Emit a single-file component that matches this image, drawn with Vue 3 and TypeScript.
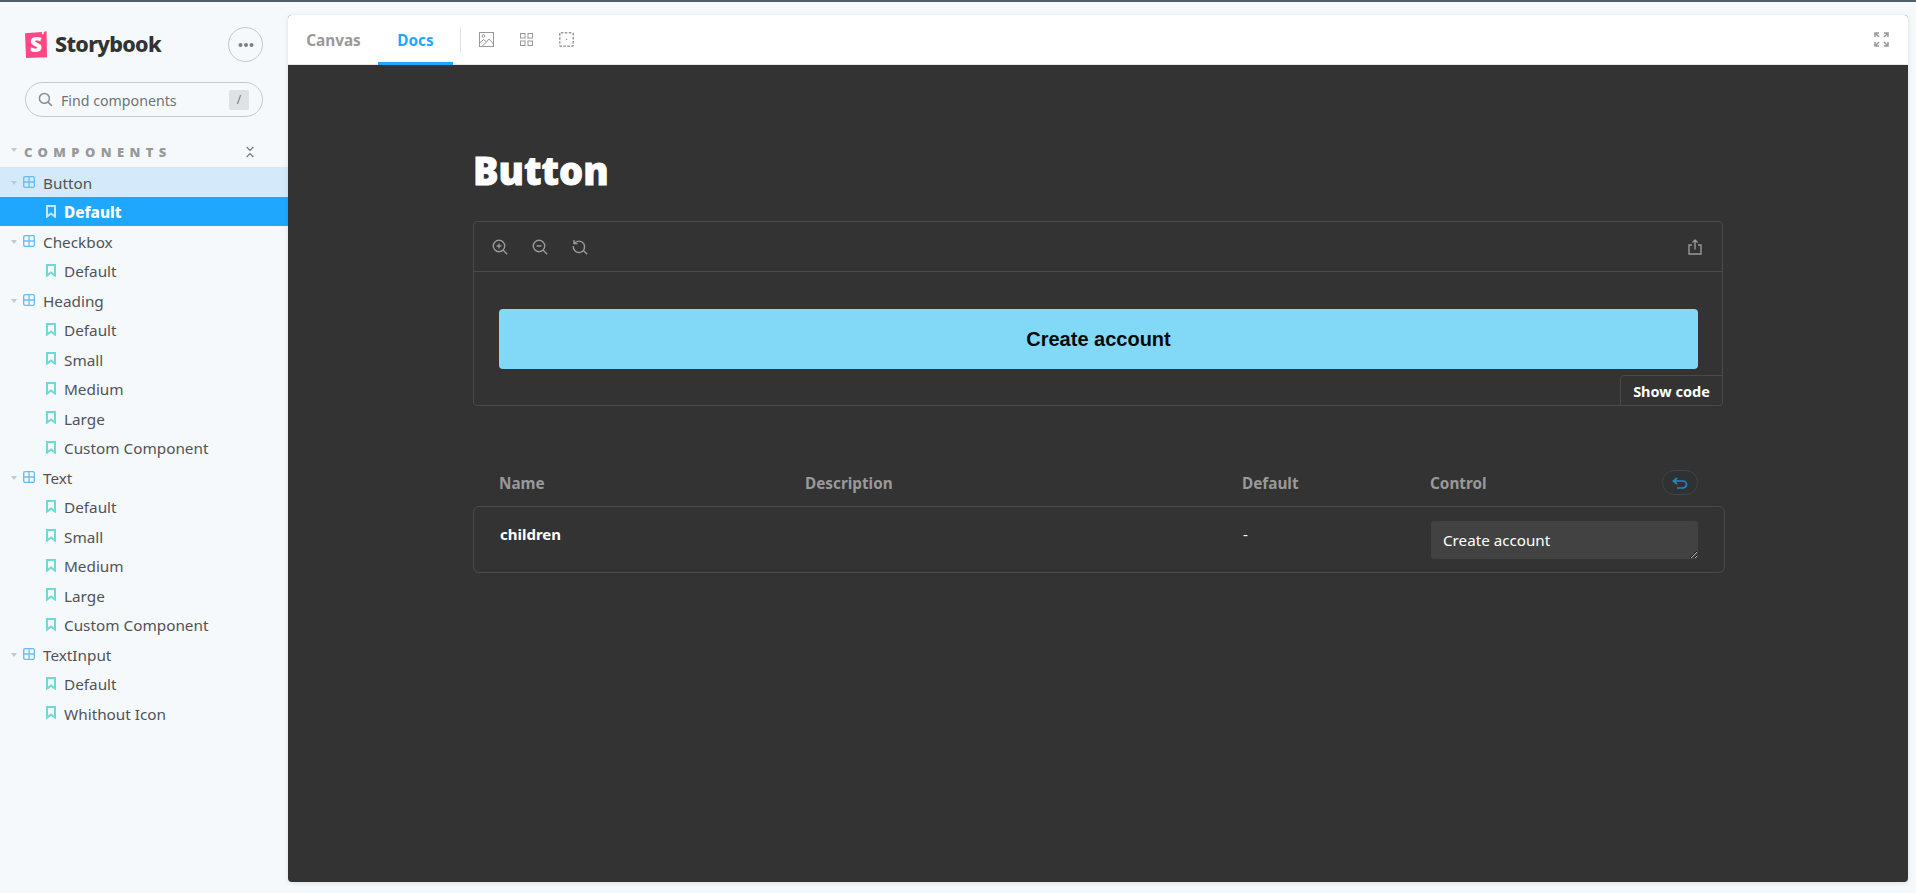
<script setup lang="ts">
import { ref } from "vue";

const groups = [
  { name: "Button", stories: ["Default"] },
  { name: "Checkbox", stories: ["Default"] },
  { name: "Heading", stories: ["Default", "Small", "Medium", "Large", "Custom Component"] },
  { name: "Text", stories: ["Default", "Small", "Medium", "Large", "Custom Component"] },
  { name: "TextInput", stories: ["Default", "Whithout Icon"] },
];

const childrenValue = ref("Create account");
</script>

<template>
  <div class="page">
    <aside class="sidebar">
      <div class="brand-row">
        <div class="brand">
          <svg class="logo" viewBox="0 0 22 27" aria-hidden="true">
            <path d="M0 2.2 17 1.1l.1 2.2 1.6-.1.1-2.2L21.6 0 22 26.2 1 27z" fill="#ff4785" />
            <text x="11" y="20.5" text-anchor="middle" class="logo-s">S</text>
          </svg>
          <span class="brand-name">Storybook</span>
        </div>
        <button class="menu-btn" aria-label="menu">
          <svg width="16" height="16" viewBox="0 0 16 16"><circle cx="2.5" cy="8" r="2" /><circle cx="8" cy="8" r="2" /><circle cx="13.5" cy="8" r="2" /></svg>
        </button>
      </div>

      <div class="search">
        <svg class="search-icon" viewBox="0 0 16 16" fill="none"><circle cx="6.8" cy="6.8" r="5.3" /><path d="m10.8 10.8 4 4" /></svg>
        <span class="search-text">Find components</span>
        <span class="slash">/</span>
      </div>

      <div class="section-head">
        <span class="caret section-caret"></span>
        <span class="section-title">COMPONENTS</span>
        <svg class="collapse" viewBox="0 0 12 14" fill="none"><path d="m2 1 4 4 4-4M2 13l4-4 4 4" /></svg>
      </div>

      <nav class="tree">
        <template v-for="(group, g) in groups" :key="group.name">
          <div class="row group-row" :class="{ open: g === 0 }">
            <span class="caret"></span>
            <svg class="comp-icon" viewBox="0 0 12 12"><path d="M2 0h8a2 2 0 0 1 2 2v8a2 2 0 0 1-2 2H2a2 2 0 0 1-2-2V2a2 2 0 0 1 2-2Zm.4 1.3a1 1 0 0 0-1 1v3h4v-4Zm4.3 0v4h4v-3a1 1 0 0 0-1-1Zm-5.300 5.400v3a1 1 0 0 0 1 1h3v-4Zm5.300 0v4h3a1 1 0 0 0 1-1v-3Z" /></svg>
            <span>{{ group.name }}</span>
          </div>
          <div
            v-for="story in group.stories"
            :key="group.name + story"
            class="row story-row"
            :class="{ selected: g === 0 }"
          >
            <svg class="story-icon" viewBox="0 0 10 13" fill="none"><path d="M1 1h8v10.600L5 8.500l-4 3.100z" /></svg>
            <span>{{ story }}</span>
          </div>
        </template>
      </nav>
    </aside>

    <main class="panel">
      <header class="toolbar">
        <a class="tab">Canvas</a>
        <a class="tab active">Docs</a>
        <span class="bar-divider"></span>
        <svg class="tool" viewBox="0 0 15 15" fill="none"><rect x=".5" y=".5" width="14" height="14" /><circle cx="4.500" cy="4" r="1.300" /><path d="m.5 11 4-3.500 3 2.500 2.500-3 4.500 5M3 14.500l4.500-4.500" /></svg>
        <svg class="tool small" viewBox="0 0 13 13" fill="none"><rect x=".5" y=".5" width="4.500" height="4.500" /><rect x="8" y=".5" width="4.500" height="4.500" /><rect x=".5" y="8" width="4.500" height="4.500" /><rect x="8" y="8" width="4.500" height="4.500" /></svg>
        <svg class="tool" viewBox="0 0 15 15" fill="none"><rect x=".8" y=".8" width="13.400" height="13.400" rx="1" stroke-dasharray="2.500 1.500" stroke-width="1.500" /><circle cx="7.500" cy="7.500" r=".8" fill="#999" stroke="none" /></svg>
        <svg class="tool full" viewBox="0 0 15 15" fill="none"><path d="M1 5V1h4M1 1l4 4M10 1h4v4M14 1l-4 4M1 10v4h4M1 14l4-4M14 10v4h-4M14 14l-4-4" /></svg>
      </header>

      <div class="docs">
        <h1 class="title">Button</h1>

        <section class="preview">
          <div class="preview-bar">
            <svg class="zoom-icon" viewBox="0 0 16 16" fill="none"><circle cx="7" cy="7" r="5.700" /><path d="m11.200 11.200 4 4M4.500 7h5M7 4.500v5" /></svg>
            <svg class="zoom-icon" viewBox="0 0 16 16" fill="none"><circle cx="7" cy="7" r="5.700" /><path d="m11.200 11.200 4 4M4.500 7h5" /></svg>
            <svg class="zoom-icon" viewBox="0 0 16 16" fill="none"><path d="M2.300 4.500A5.700 5.700 0 1 1 1.300 7M2 1v3.600h3.600M11.200 11.200l4 4" /></svg>
            <svg class="zoom-icon share" viewBox="0 0 16 16" fill="none"><path d="M5 6H2v9h12V6h-3M8 10.500V1M5.500 3.500 8 1l2.500 2.500" /></svg>
          </div>
          <div class="preview-body">
            <button class="cta">Create account</button>
          </div>
          <button class="show-code">Show code</button>
        </section>

        <section class="args">
          <div class="args-head">
            <span>Name</span>
            <span>Description</span>
            <span>Default</span>
            <span class="control-head">
              Control
              <button class="undo" aria-label="reset">
                <svg viewBox="0 0 16 12" fill="none"><path d="M5 1 1.500 4 5 7M2 4h9a3.500 3.500 0 0 1 0 7H5" /></svg>
              </button>
            </span>
          </div>
          <div class="args-row">
            <strong>children</strong>
            <span></span>
            <span class="dash">-</span>
            <textarea v-model="childrenValue" class="control" rows="1"></textarea>
          </div>
        </section>
      </div>
    </main>
  </div>
</template>

<style>
html,
body {
  margin: 0;
  background: #f6f9fc;
}
</style>

<style scoped>
.page {
  display: flex;
  height: 893px;
  box-sizing: border-box;
  border-top: 2px solid #4d5f6b;
  background: #f6f9fc;
  overflow: hidden;
  font-family: "Noto Sans", "Open Sans", sans-serif;
  color: #333;
}

.sidebar {
  width: 288px;
  flex: none;
}

.brand-row {
  display: flex;
  align-items: center;
  justify-content: space-between;
  margin-top: 25px;
  padding: 0 25px;
}

.brand {
  display: flex;
  align-items: center;
  gap: 8px;
}

.logo {
  width: 22px;
  height: 27px;
}

.logo-s {
  fill: #fff;
  font: 900 21px "Noto Sans", sans-serif;
}

.brand-name {
  margin-top: -2px;
  font: 800 21.5px "Noto Sans", sans-serif;
  letter-spacing: -0.7px;
  color: #333;
}

.menu-btn {
  width: 35px;
  height: 35px;
  padding: 0;
  border: 1px solid #c4c8cc;
  border-radius: 50%;
  background: transparent;
  display: flex;
  align-items: center;
  justify-content: center;
}

.menu-btn svg {
  fill: #7b7f84;
}

.search {
  display: flex;
  align-items: center;
  height: 35px;
  margin: 20px 25px 0;
  padding: 0 13px 0 12px;
  border: 1px solid #c6cacd;
  border-radius: 18px;
  box-sizing: border-box;
}

.search-icon {
  width: 15px;
  height: 15px;
  stroke: #8c8f92;
  stroke-width: 1.6;
}

.search-text {
  flex: 1;
  margin-left: 8px;
  padding-top: 2px;
  font-size: 14.2px;
  color: #6f7276;
}

.slash {
  width: 20px;
  height: 20px;
  border-radius: 2px;
  background: #dfe2e5;
  color: #777;
  font-size: 12px;
  line-height: 20px;
  text-align: center;
}

.section-head {
  display: flex;
  align-items: center;
  height: 30px;
  margin-top: 20px;
  padding-left: 11px;
}

.section-title {
  margin-left: 7px;
  font: 900 13px "Noto Sans", sans-serif;
  letter-spacing: 5.4px;
  color: #999;
}

.collapse {
  width: 10px;
  height: 14px;
  margin-left: auto;
  margin-right: 33px;
  stroke: #777;
  stroke-width: 1.5;
}

.caret {
  width: 0;
  height: 0;
  flex: none;
  border-left: 3px solid transparent;
  border-right: 3px solid transparent;
  border-top: 4px solid #c5c8cb;
}

.section-caret {
  margin-top: -4px;
}

.tree {
  margin-top: 0;
}

.row {
  display: flex;
  align-items: center;
  height: 29.5px;
  box-sizing: border-box;
  padding-top: 2px;
  font-size: 15.3px;
  color: #505356;
}

.group-row {
  padding-left: 11px;
}

.group-row.open {
  background: #d4eafb;
}

.comp-icon {
  width: 12px;
  height: 12px;
  margin: -2px 8px 0 6px;
  fill: #69bdf5;
}

.story-row {
  padding-left: 46px;
}

.story-icon {
  width: 10px;
  height: 13px;
  margin: -2px 8px 0 0;
  stroke: #6fdad5;
  stroke-width: 2;
}

.story-row.selected {
  background: #1ea7fd;
  color: #fff;
  font-weight: 800;
}

.story-row.selected .story-icon {
  stroke: #c5e8fd;
}

.panel {
  flex: 1;
  margin: 13px 8px 11px 0;
  border-radius: 4px;
  background: #333;
  overflow: hidden;
  box-shadow: 0 1px 5px rgba(0, 0, 0, 0.1);
}

.toolbar {
  display: flex;
  align-items: center;
  height: 50px;
  box-sizing: border-box;
  padding-left: 10px;
  background: #fff;
  box-shadow: inset 0 -1px 0 #e6e6e6;
}

.tab {
  display: flex;
  align-items: center;
  justify-content: center;
  height: 50px;
  box-sizing: border-box;
  font-size: 15.3px;
  font-weight: 700;
  color: #999;
}

.tab:first-child {
  width: 80px;
  padding-right: 9px;
}

.tab.active {
  width: 75px;
  padding-top: 2px;
  color: #1ea7fd;
  border-bottom: 3px solid #1ea7fd;
}

.bar-divider {
  width: 1px;
  height: 26px;
  margin: 0 18px 0 7px;
  background: #e2e2e2;
}

.tool {
  width: 15px;
  height: 15px;
  margin-top: -2px;
  margin-right: 26px;
  stroke: #999;
  flex: none;
}

.tool.small {
  width: 13px;
  height: 13px;
}

.tool.full {
  margin-left: auto;
  margin-right: 19px;
  stroke-width: 1.5;
}

.docs {
  margin: 0 185px;
}

.title {
  margin: 0;
  padding-top: 80px;
  height: 76px;
  font: 900 38px/50px "Noto Sans", sans-serif;
  -webkit-text-stroke: 0.8px #fff;
  color: #fff;
}

.preview {
  position: relative;
  height: 185px;
  box-sizing: border-box;
  border: 1px solid #4a4a4a;
  border-radius: 4px;
}

.preview-bar {
  display: flex;
  align-items: center;
  gap: 24px;
  height: 50px;
  box-sizing: border-box;
  padding: 0 19px 0 18px;
  border-bottom: 1px solid #4a4a4a;
}

.zoom-icon {
  width: 16px;
  height: 16px;
  stroke: #999;
  stroke-width: 1.4;
}

.share {
  margin-left: auto;
}

.preview-body {
  padding: 37px 24px 0 25px;
}

.cta {
  display: block;
  width: 100%;
  height: 60px;
  border: 0;
  border-radius: 4px;
  background: #81d8f7;
  font: 700 20px "Liberation Sans", sans-serif;
  color: #09090a;
}

/* sits over the preview corner */
.show-code {
  position: absolute;
  right: -1px;
  bottom: -1px;
  width: 103px;
  height: 31px;
  padding: 0;
  border: 1px solid #4a4a4a;
  border-radius: 4px 0 4px 0;
  background: #333;
  font-family: "Noto Sans", sans-serif;
  font-size: 14.5px;
  font-weight: 700;
  color: #fff;
}

.args {
  margin: 61px -2px 0 0;
  font-size: 15px;
}

.args-head,
.args-row {
  display: grid;
  grid-template-columns: 306px 437px 188px 1fr;
  padding: 0 27px 0 26px;
}

.args-head {
  align-items: center;
  height: 39px;
  box-sizing: border-box;
  padding-bottom: 8px;
  font-size: 15.3px;
  font-weight: 700;
  color: #999;
}

.control-head {
  display: flex;
  align-items: center;
  justify-content: space-between;
}

.undo {
  display: flex;
  align-items: center;
  justify-content: center;
  width: 36px;
  height: 25px;
  padding: 0;
  border: 1px solid #3f4549;
  border-radius: 13px;
  background: #2f3133;
}

.undo svg {
  width: 16px;
  height: 12px;
  stroke: #1e87c9;
  stroke-width: 1.7;
}

.args-row {
  height: 67px;
  box-sizing: border-box;
  border: 1px solid #4a4a4a;
  border-radius: 6px;
  padding-top: 14px;
  color: #fff;
  line-height: 26px;
}

.args-row strong {
  font-size: 15px;
}

.control {
  display: block;
  width: 267px;
  height: 38px;
  box-sizing: border-box;
  padding: 8px 12px;
  border: 0;
  border-radius: 3px;
  outline: none;
  background: #424242;
  color: #fff;
  color-scheme: dark;
  font-family: "Noto Sans", sans-serif;
  font-size: 15.2px;
  line-height: 22px;
}
</style>
